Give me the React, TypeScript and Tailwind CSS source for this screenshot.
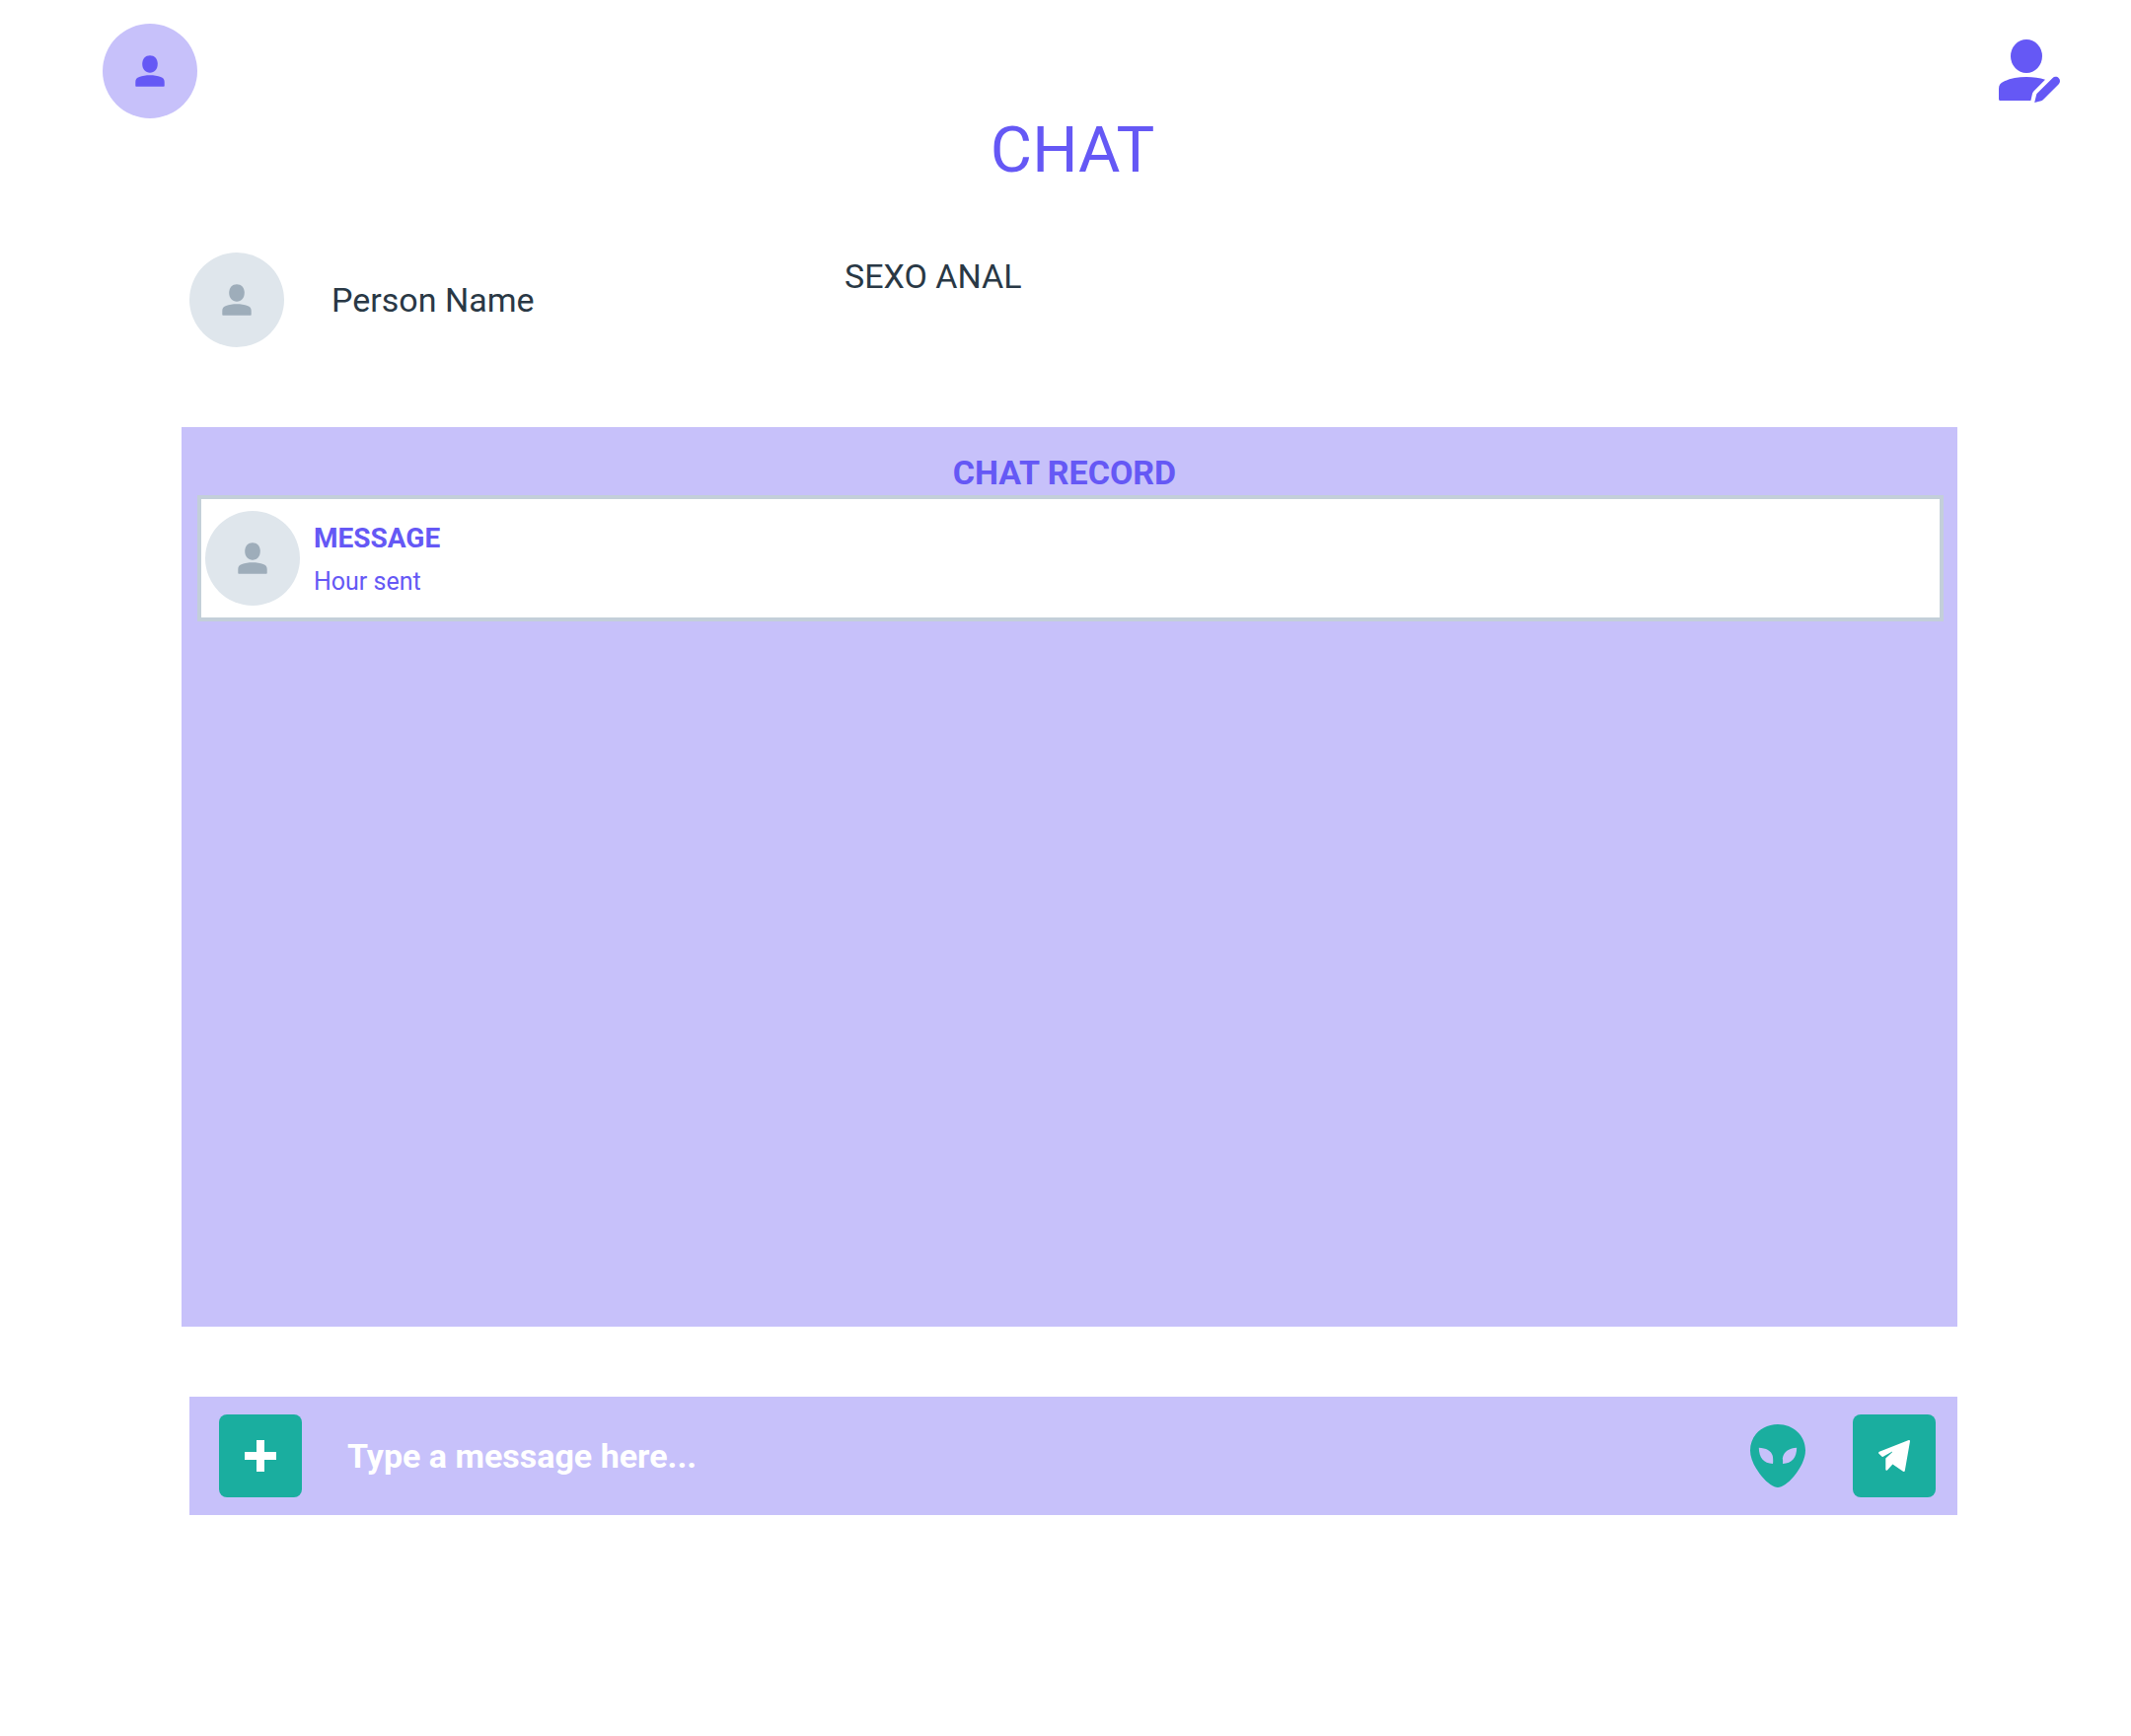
import React from "react";

function UserIcon() {
  return (
    <svg viewBox="0 0 32 32" className="size-8" fill="currentColor" aria-hidden="true">
      <path d="M16 0.300C20.500 0.300 23.800 3.800 23.800 8.700C23.800 14 20.500 17.700 16 17.700C11.500 17.700 8.200 14 8.200 8.700C8.200 3.800 11.500 0.300 16 0.300Z" />
      <path d="M2 31.700Q1.300 31.700 1.300 31V27C1.300 24.200 2.700 22.800 5.200 21.900C8.200 20.800 12 20.300 16 20.300C20 20.300 23.800 20.800 26.800 21.900C29.300 22.800 30.700 24.200 30.700 27V31Q30.700 31.700 30 31.700Z" />
    </svg>
  );
}

function Avatar({ tone }: { tone: "purple" | "gray" }) {
  return (
    <span
      className={
        tone === "purple"
          ? "flex size-24 shrink-0 items-center justify-center rounded-full bg-[#c7c1fa] text-[#6558f5]"
          : "flex size-24 shrink-0 items-center justify-center rounded-full bg-[#dfe6ec] text-[#9eadba]"
      }
    >
      <UserIcon />
    </span>
  );
}

function UserEditIcon() {
  return (
    <svg viewBox="0 0 62 64" className="h-16 w-[62px]" fill="currentColor" aria-hidden="true">
      <ellipse cx="28" cy="17" rx="16" ry="17" />
      <path d="M1.600 62Q0 62 0 60.400V50C0 46.400 1.600 44.400 4.800 42.800C11 39.600 19 38 28 38C35 38 41.600 39 47 40.800L35.400 52.400Q34.300 53.500 34 55L32.400 62Z" />
      <path d="M36.200 64L38 56.400Q38.200 55.400 39 54.600L54.400 39.200C56.200 37.400 59 37.400 60.800 39.200C62.400 40.800 62.400 43.400 60.800 45.200L45 61Q44.200 61.900 43 62.200Z" />
    </svg>
  );
}

function PlusIcon() {
  return (
    <svg viewBox="0 0 32 32" className="size-8" fill="currentColor" aria-hidden="true">
      <path d="M12 0H20V12H32V20H20V32H12V20H0V12H12Z" />
    </svg>
  );
}

function AlienIcon() {
  return (
    <svg viewBox="0 0 56 64" className="h-16 w-14" fill="currentColor" aria-hidden="true">
      <path
        fillRule="evenodd"
        d="M28 0C44 0 56 11.500 56 26.500C56 35 51 44.500 44.500 52.500C38.500 59.800 32 64 28 64C24 64 17.500 59.800 11.500 52.500C5 44.500 0 35 0 26.500C0 11.500 12 0 28 0ZM8.800 23.800C9 34 13.500 39.500 23 40C23.400 37.500 23.200 34.500 22.800 32C21.500 27 16 24 8.800 23.800ZM47.200 23.800C47 34 42.500 39.500 33 40C33.200 38 33.200 36.500 32.800 34.500C34 27.500 40 24 47.200 23.800Z"
      />
    </svg>
  );
}

function SendIcon() {
  return (
    <svg viewBox="0 0 32 32" className="size-8" fill="currentColor" aria-hidden="true">
      <path d="M30.700 0.100C31.600 -0.200 32.200 0.400 32 1.300L26.800 31C26.600 32 25.800 32.300 25 31.800L14.400 24.600L9 30.400C8.200 31.200 7.300 30.900 7.300 29.800V18.600L14 12.200C14 11.800 13.600 11.700 13.200 11.900L4.800 16.700C4.200 17 3.700 17 3.300 16.600L0.500 13.800C-0.200 13.100 0 12.200 0.900 11.800Z" />
    </svg>
  );
}

export default function App() {
  return (
    <div className="min-h-screen bg-white pb-24 font-['Roboto','Liberation_Sans',sans-serif] text-[34px] leading-12 text-[#293845]">
      <header className="pt-6">
        <div className="flex items-center justify-between pr-[72px] pl-[104px]">
          <button type="button" aria-label="Profile" className="rounded-full">
            <Avatar tone="purple" />
          </button>
          <button type="button" aria-label="Edit profile" className="text-[#6558f5]">
            <UserEditIcon />
          </button>
        </div>
        <h1 className="pl-[14px] text-center text-[65px] leading-16 text-[#6558f5]">CHAT</h1>
      </header>

      <main className="pt-[72px] pr-[176px] pl-[184px]">
        <section className="flex items-start pl-2">
          <div className="flex w-[664px] items-center gap-12">
            <Avatar tone="gray" />
            <p>Person Name</p>
          </div>
          <p>SEXO ANAL</p>
        </section>

        <section className="mt-[81px] min-h-[912px] bg-[#c7c1fa] pt-6 pr-[14px] pl-4">
          <h2 className="pr-3 text-center leading-[45px] font-bold text-[#6558f5]">CHAT RECORD</h2>
          <article className="flex h-32 items-center gap-[14px] border-4 border-[#c3cfd9] bg-white pl-1 text-[#6558f5]">
            <Avatar tone="gray" />
            <div className="flex flex-col gap-2 pt-1">
              <h3 className="text-[28px] leading-9 font-bold">MESSAGE</h3>
              <p className="text-[25px] leading-9">Hour sent</p>
            </div>
          </article>
        </section>

        <form
          className="mt-[71px] ml-2 flex h-[120px] items-center bg-[#c7c1fa] pr-[22px] pl-[30px]"
          onSubmit={(event) => event.preventDefault()}
        >
          <button
            type="button"
            aria-label="Add attachment"
            className="flex size-[84px] shrink-0 items-center justify-center rounded-lg bg-[#1aae9f] text-white"
          >
            <PlusIcon />
          </button>
          <input
            type="text"
            aria-label="Message"
            placeholder="Type a message here..."
            className="ml-[46px] h-14 min-w-0 flex-1 bg-transparent font-bold text-white outline-none placeholder:text-white placeholder:opacity-100"
          />
          <button type="button" aria-label="Emoji" className="mr-12 shrink-0 text-[#1aae9f]">
            <AlienIcon />
          </button>
          <button
            type="submit"
            aria-label="Send"
            className="flex size-[84px] shrink-0 items-center justify-center rounded-lg bg-[#1aae9f] text-white"
          >
            <SendIcon />
          </button>
        </form>
      </main>
    </div>
  );
}
